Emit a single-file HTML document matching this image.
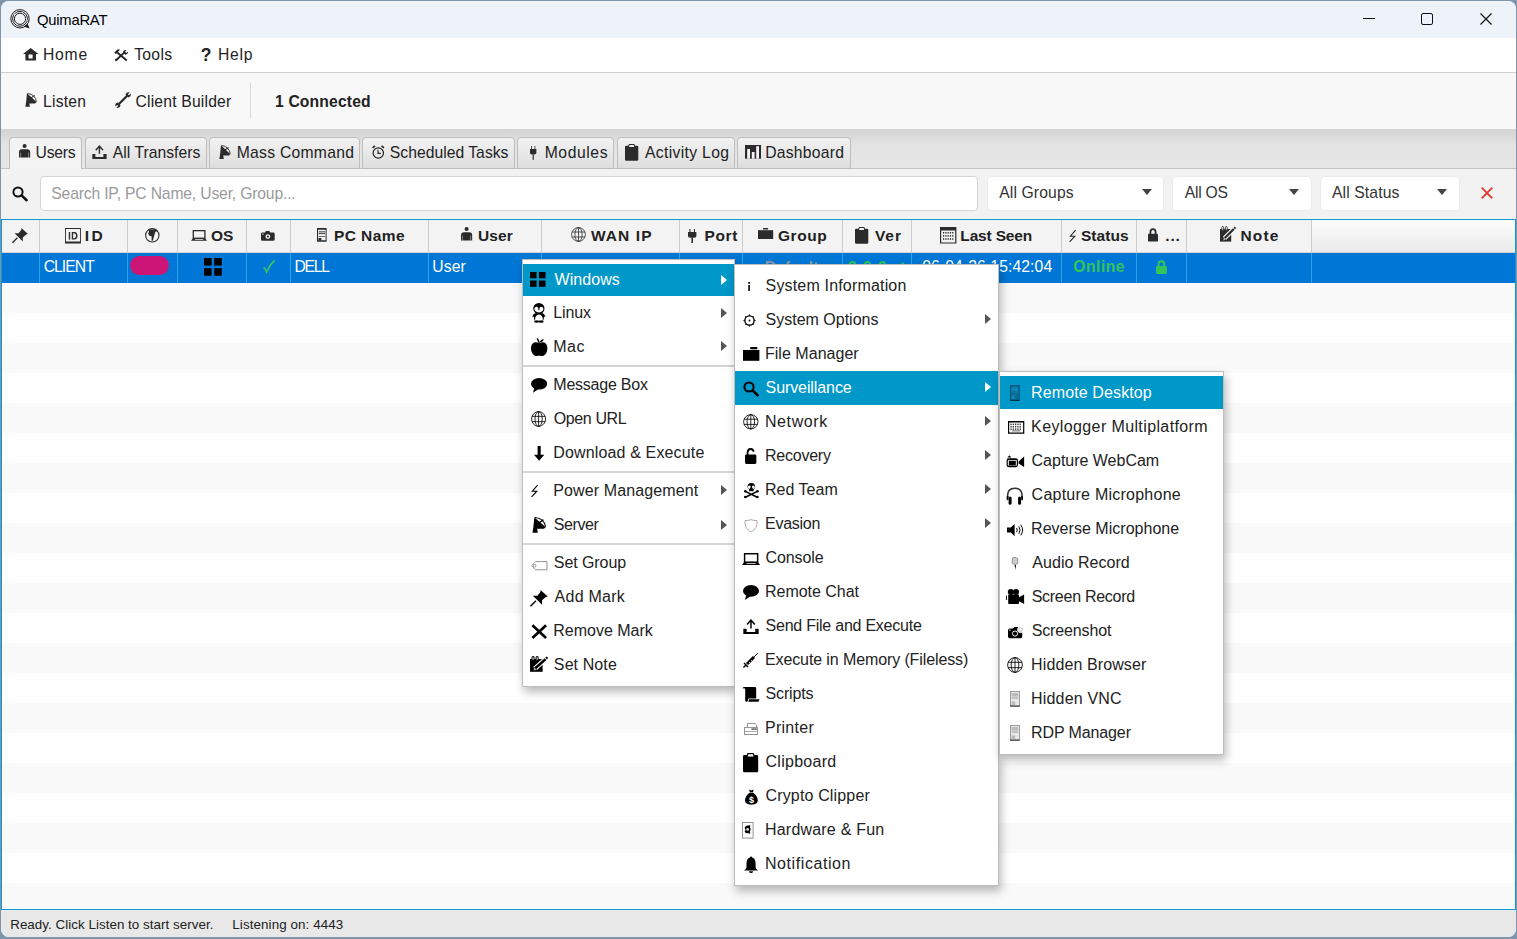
<!DOCTYPE html>
<html><head><meta charset="utf-8"><title>QuimaRAT</title>
<style>
html,body{margin:0;padding:0;}
body{width:1517px;height:939px;overflow:hidden;position:relative;background:#7f95ab;font-family:"Liberation Sans",sans-serif;}
.t{position:absolute;white-space:nowrap;line-height:20px;height:20px;}
svg{overflow:visible;}
</style></head><body>
<div id="win" style="position:absolute;left:1px;top:1px;width:1515px;height:936px;border-radius:8px;overflow:hidden;background:#f2f2f2;">
<div style="position:absolute;left:-1px;top:-1px;width:1517px;height:939px;">
<div style="position:absolute;left:0.00px;top:0.00px;width:1517.00px;height:38.00px;background:#eef3f9;"></div>
<div class="t" style="left:37.00px;top:10.36px;font-size:14.80px;letter-spacing:-0.236px;color:#000;">QuimaRAT</div>
<svg style="position:absolute;left:10.00px;top:9.00px;color:#111;fill:#111;" width="20.00" height="20.00" viewBox="0 0 20 20" preserveAspectRatio="none"><g fill="none" stroke="#111" stroke-width="0.95"><circle cx="10" cy="9.8" r="9.2"/><circle cx="10" cy="9.8" r="7.4"/><circle cx="10" cy="9.8" r="5.6"/></g><path d="M14 17.5L19.6 19.6L17.6 15" fill="#111"/><path d="M4 6L7 4M12 3L14 5M16 9L17 12M5 14L8 16" stroke="#f0f3f9" stroke-width="0.8"/></svg>
<div style="position:absolute;left:1363.00px;top:18.00px;width:12.00px;height:1.20px;background:#111;"></div>
<div style="position:absolute;left:1421.00px;top:13.00px;width:12.00px;height:12.00px;border:1.2px solid #111;border-radius:2px;box-sizing:border-box;"></div>
<svg style="position:absolute;left:1480.00px;top:13.00px;" width="12" height="12" viewBox="0 0 12 12"><path d="M0.5 0.5L11.5 11.5M11.5 0.5L0.5 11.5" stroke="#111" stroke-width="1.2"/></svg>
<div style="position:absolute;left:0.00px;top:38.00px;width:1517.00px;height:34.00px;background:#fff;"></div>
<div style="position:absolute;left:0.00px;top:72.00px;width:1517.00px;height:1.00px;background:#cfcfcf;"></div>
<div class="t" style="left:43.01px;top:45.45px;font-size:15.70px;letter-spacing:0.768px;color:#222;">Home</div>
<div class="t" style="left:134.15px;top:45.45px;font-size:15.70px;letter-spacing:0.317px;color:#222;">Tools</div>
<div class="t" style="left:218.11px;top:45.45px;font-size:15.70px;letter-spacing:0.686px;color:#222;">Help</div>
<svg style="position:absolute;left:23.30px;top:48.20px;color:#2b2b2b;fill:#2b2b2b;" width="15.40" height="12.60" viewBox="0 0 15.4 12.6" preserveAspectRatio="none"><path fill-rule="evenodd" d="M7.7 0L15.4 6.1H13V12.6H2.4V6.1H0Z M5.6 6.6V10.6H9.6V6.6Z"/></svg>
<svg style="position:absolute;left:114.00px;top:48.70px;color:#222;fill:#222;" width="14.00" height="12.20" viewBox="0 0 14 12.2" preserveAspectRatio="none"><g stroke="currentColor" stroke-width="1.9" stroke-linecap="butt"><path d="M3.2 3.6L12.8 11.6"/><path d="M2 11.2L10.6 3.4"/></g><path d="M0.2 3.6L3.8 0.2L6 0.8L2 4.9Z"/><path d="M9 3.2Q9.6 0.6 12.4 1.2L11 2.8L12.2 4L13.8 2.6Q14.2 5.4 11.4 5.8Z"/><path d="M1 9.5L3.6 12L1.4 12.2Z"/></svg>
<div class="t" style="left:200.80px;top:44.53px;font-size:17.50px;font-weight:bold;color:#222;">?</div>
<div style="position:absolute;left:0.00px;top:73.00px;width:1517.00px;height:56.00px;background:#f8f8f8;"></div>
<div class="t" style="left:43.01px;top:91.65px;font-size:15.70px;letter-spacing:0.222px;color:#222;">Listen</div>
<div class="t" style="left:135.50px;top:91.65px;font-size:15.70px;letter-spacing:0.183px;color:#222;">Client Builder</div>
<div style="position:absolute;left:250.00px;top:83.00px;width:1.00px;height:35.00px;background:#d9d9d9;"></div>
<svg style="position:absolute;left:25.10px;top:92.90px;color:#2b2b2b;fill:#2b2b2b;" width="11.80" height="14.00" viewBox="0 0 12 14" preserveAspectRatio="none"><path d="M2 0.2L11.8 9L10.2 10.4H4.4L5 13.8H0.4L1.2 8.6Z"/><path d="M2.6 0.5Q10.2 1.2 11.7 8.6" fill="none" stroke="currentColor" stroke-width="0.9"/><path d="M5.6 5.4L9.8 2.4" stroke="currentColor" stroke-width="1.1"/></svg>
<svg style="position:absolute;left:114.90px;top:91.80px;color:#2b2b2b;fill:#2b2b2b;" width="16.10" height="16.20" viewBox="0 0 16 16.2" preserveAspectRatio="none"><path d="M3.2 12.8L12.6 3.2" stroke="currentColor" stroke-width="2.3"/><path d="M10.4 2.6Q11.4 -0.4 14.6 0.4L12.8 2.2L13.8 3.2L15.6 1.6Q16.4 4.6 13.4 5.6Z"/><path d="M5.6 13.6Q4.6 16.6 1.4 15.8L3.2 14L2.2 13L0.4 14.6Q-0.4 11.6 2.6 10.6Z"/></svg>
<div class="t" style="left:275.01px;top:91.65px;font-size:15.70px;font-weight:bold;letter-spacing:0.151px;color:#222;">1 Connected</div>
<div style="position:absolute;left:0.00px;top:129.00px;width:1517.00px;height:39.00px;background:linear-gradient(#d3d3d3,#e3e3e3 40%,#e6e6e6);"></div>
<div style="position:absolute;left:0.00px;top:168.00px;width:1517.00px;height:1.00px;background:#c4c4c4;"></div>
<div style="position:absolute;left:8.50px;top:137.00px;width:73.70px;height:32.00px;background:#f3f3f3;border:1px solid #bdbdbd;border-bottom:none;border-radius:4px 4px 0 0;box-sizing:border-box;"></div>
<div class="t" style="left:35.59px;top:142.65px;font-size:15.70px;letter-spacing:-0.255px;color:#222;">Users</div>
<div style="position:absolute;left:84.50px;top:137.00px;width:122.50px;height:32.00px;background:linear-gradient(#f2f2f2,#dedede);border:1px solid #bdbdbd;border-radius:4px 4px 0 0;box-sizing:border-box;"></div>
<div class="t" style="left:112.77px;top:142.65px;font-size:15.70px;letter-spacing:0.029px;color:#222;">All Transfers</div>
<div style="position:absolute;left:209.00px;top:137.00px;width:151.00px;height:32.00px;background:linear-gradient(#f2f2f2,#dedede);border:1px solid #bdbdbd;border-radius:4px 4px 0 0;box-sizing:border-box;"></div>
<div class="t" style="left:236.71px;top:142.65px;font-size:15.70px;letter-spacing:0.273px;color:#222;">Mass Command</div>
<div style="position:absolute;left:362.00px;top:137.00px;width:153.00px;height:32.00px;background:linear-gradient(#f2f2f2,#dedede);border:1px solid #bdbdbd;border-radius:4px 4px 0 0;box-sizing:border-box;"></div>
<div class="t" style="left:389.79px;top:142.65px;font-size:15.70px;letter-spacing:0.026px;color:#222;">Scheduled Tasks</div>
<div style="position:absolute;left:517.00px;top:137.00px;width:97.00px;height:32.00px;background:linear-gradient(#f2f2f2,#dedede);border:1px solid #bdbdbd;border-radius:4px 4px 0 0;box-sizing:border-box;"></div>
<div class="t" style="left:544.71px;top:142.65px;font-size:15.70px;letter-spacing:0.585px;color:#222;">Modules</div>
<div style="position:absolute;left:617.00px;top:137.00px;width:118.00px;height:32.00px;background:linear-gradient(#f2f2f2,#dedede);border:1px solid #bdbdbd;border-radius:4px 4px 0 0;box-sizing:border-box;"></div>
<div class="t" style="left:644.97px;top:142.65px;font-size:15.70px;letter-spacing:0.342px;color:#222;">Activity Log</div>
<div style="position:absolute;left:737.00px;top:137.00px;width:114.00px;height:32.00px;background:linear-gradient(#f2f2f2,#dedede);border:1px solid #bdbdbd;border-radius:4px 4px 0 0;box-sizing:border-box;"></div>
<div class="t" style="left:765.21px;top:142.65px;font-size:15.70px;letter-spacing:0.249px;color:#222;">Dashboard</div>
<svg style="position:absolute;left:18.60px;top:143.90px;color:#2b2b2b;fill:#2b2b2b;" width="11.20" height="13.60" viewBox="0 0 11.2 13.6" preserveAspectRatio="none"><circle cx="5.6" cy="2" r="2.05"/><path d="M0 13.6V8.2Q0 5.2 3 5.2H8.2Q11.2 5.2 11.2 8.2V13.6Z"/><path d="M1.6 8.6V13.6M9.6 8.6V13.6" stroke="#fff" stroke-opacity="0.7" stroke-width="0.6"/></svg>
<svg style="position:absolute;left:92.40px;top:145.00px;color:#2b2b2b;fill:#2b2b2b;" width="15.00" height="14.00" viewBox="0 0 15 14" preserveAspectRatio="none"><path d="M3.8 5.2L7.4 1L11 5.2M7.4 1.2V8.8" fill="none" stroke="currentColor" stroke-width="1.4"/><path d="M0.3 9.1H3.4V12.1H11.4V9.1H14.6V13.9H0.3Z"/></svg>
<svg style="position:absolute;left:219.40px;top:144.60px;color:#2b2b2b;fill:#2b2b2b;" width="11.60" height="14.30" viewBox="0 0 12 14" preserveAspectRatio="none"><path d="M2 0.2L11.8 9L10.2 10.4H4.4L5 13.8H0.4L1.2 8.6Z"/><path d="M2.6 0.5Q10.2 1.2 11.7 8.6" fill="none" stroke="currentColor" stroke-width="0.9"/><path d="M5.6 5.4L9.8 2.4" stroke="currentColor" stroke-width="1.1"/></svg>
<svg style="position:absolute;left:372.00px;top:144.80px;color:#222;fill:#222;" width="12.60" height="14.00" viewBox="0 0 12.6 14" preserveAspectRatio="none"><g fill="none" stroke="currentColor"><circle cx="6.3" cy="8" r="5.2" stroke-width="1.2"/><path d="M6 4.8V8.4H8.8" stroke-width="1.1"/><path d="M0.6 2.8L3 0.8M12 2.8L9.6 0.8" stroke-width="1.5"/></g></svg>
<svg style="position:absolute;left:529.90px;top:146.00px;color:#2b2b2b;fill:#2b2b2b;" width="6.40" height="13.80" viewBox="0 0 6.4 13.8" preserveAspectRatio="none"><rect x="1.1" y="0" width="0.8" height="3.4"/><rect x="4.5" y="0" width="0.8" height="3.4"/><path d="M0 3H6.4V6.8Q6.4 8.6 4.6 8.6H1.8Q0 8.6 0 6.8Z"/><rect x="2.6" y="8.4" width="1.2" height="5.4"/></svg>
<svg style="position:absolute;left:625.40px;top:144.10px;color:#2b2b2b;fill:#2b2b2b;" width="13.30" height="16.70" viewBox="0 0 13.3 16.7" preserveAspectRatio="none"><path fill-rule="evenodd" d="M1.2 1.8H3.3L4 0H9.3L10 1.8H12.1Q13.3 1.8 13.3 3V15.5Q13.3 16.7 12.1 16.7H1.2Q0 16.7 0 15.5V3Q0 1.8 1.2 1.8Z M4.6 1.1L4.1 3H9.2L8.7 1.1Z"/></svg>
<svg style="position:absolute;left:744.90px;top:145.00px;color:#2b2b2b;fill:#2b2b2b;" width="16.00" height="13.70" viewBox="0 0 16 13.7" preserveAspectRatio="none"><rect x="0" y="0" width="16" height="13.7"/><rect x="2.2" y="4" width="2.8" height="9.7" fill="#f4f4f4"/><rect x="6.8" y="7" width="2.8" height="6.7" fill="#f4f4f4"/><rect x="11.2" y="1.2" width="2.8" height="12.5" fill="#f4f4f4"/></svg>
<div style="position:absolute;left:0.00px;top:169.00px;width:1517.00px;height:50.00px;background:#f2f2f2;"></div>
<svg style="position:absolute;left:12.00px;top:186.00px;color:#111;fill:#111;" width="16.00" height="15.40" viewBox="0 0 16 15.4" preserveAspectRatio="none"><g fill="none" stroke="currentColor"><circle cx="6" cy="6" r="4.6" stroke-width="2"/><path d="M9.6 9.4L14.6 14.2" stroke-width="2.6" stroke-linecap="round"/></g></svg>
<div style="position:absolute;left:39.50px;top:175.50px;width:938.00px;height:35.00px;background:#fff;border:1px solid #d4d4d4;border-radius:4px;box-sizing:border-box;"></div>
<div class="t" style="left:51.29px;top:184.15px;font-size:15.70px;letter-spacing:-0.167px;color:#9a9a9a;">Search IP, PC Name, User, Group...</div>
<div style="position:absolute;left:988.30px;top:176.70px;width:174.40px;height:33.00px;background:#fff;border-radius:4px;box-shadow:0 0 0 0.5px #e4e4e4;"></div>
<div class="t" style="left:999.27px;top:183.15px;font-size:15.70px;letter-spacing:0.122px;color:#333;">All Groups</div>
<svg style="position:absolute;left:1141.70px;top:189.00px;" width="10" height="6" viewBox="0 0 10 6"><path d="M0 0H10L5 6Z" fill="#444"/></svg>
<div style="position:absolute;left:1173.00px;top:176.70px;width:137.60px;height:33.00px;background:#fff;border-radius:4px;box-shadow:0 0 0 0.5px #e4e4e4;"></div>
<div class="t" style="left:1184.67px;top:183.15px;font-size:15.70px;letter-spacing:-0.229px;color:#333;">All OS</div>
<svg style="position:absolute;left:1289.30px;top:189.00px;" width="10" height="6" viewBox="0 0 10 6"><path d="M0 0H10L5 6Z" fill="#444"/></svg>
<div style="position:absolute;left:1321.00px;top:176.70px;width:137.60px;height:33.00px;background:#fff;border-radius:4px;box-shadow:0 0 0 0.5px #e4e4e4;"></div>
<div class="t" style="left:1331.97px;top:183.15px;font-size:15.70px;letter-spacing:0.120px;color:#333;">All Status</div>
<svg style="position:absolute;left:1437.30px;top:189.00px;" width="10" height="6" viewBox="0 0 10 6"><path d="M0 0H10L5 6Z" fill="#444"/></svg>
<svg style="position:absolute;left:1481.00px;top:186.50px;" width="12" height="12" viewBox="0 0 12 12"><path d="M0.7 0.7L11.3 11.3M11.3 0.7L0.7 11.3" stroke="#e0382c" stroke-width="1.8"/></svg>
<div style="position:absolute;left:1.00px;top:218.50px;width:1515.00px;height:691.00px;border:1px solid #0d9ad4;box-sizing:border-box;background:#fff;"></div>
<div style="position:absolute;left:2.00px;top:283.00px;width:1513.00px;height:30.00px;background:#f9f9f9;"></div>
<div style="position:absolute;left:2.00px;top:343.00px;width:1513.00px;height:30.00px;background:#f9f9f9;"></div>
<div style="position:absolute;left:2.00px;top:403.00px;width:1513.00px;height:30.00px;background:#f9f9f9;"></div>
<div style="position:absolute;left:2.00px;top:463.00px;width:1513.00px;height:30.00px;background:#f9f9f9;"></div>
<div style="position:absolute;left:2.00px;top:523.00px;width:1513.00px;height:30.00px;background:#f9f9f9;"></div>
<div style="position:absolute;left:2.00px;top:583.00px;width:1513.00px;height:30.00px;background:#f9f9f9;"></div>
<div style="position:absolute;left:2.00px;top:643.00px;width:1513.00px;height:30.00px;background:#f9f9f9;"></div>
<div style="position:absolute;left:2.00px;top:703.00px;width:1513.00px;height:30.00px;background:#f9f9f9;"></div>
<div style="position:absolute;left:2.00px;top:763.00px;width:1513.00px;height:30.00px;background:#f9f9f9;"></div>
<div style="position:absolute;left:2.00px;top:823.00px;width:1513.00px;height:30.00px;background:#f9f9f9;"></div>
<div style="position:absolute;left:2.00px;top:883.00px;width:1513.00px;height:25.00px;background:#f9f9f9;"></div>
<div style="position:absolute;left:2.00px;top:219.50px;width:1310.00px;height:33.00px;background:#f3f3f3;"></div>
<div style="position:absolute;left:1312.00px;top:219.50px;width:203.00px;height:33.00px;background:linear-gradient(#fdfdfd,#e9e9e9);"></div>
<div style="position:absolute;left:2.00px;top:252.00px;width:1513.00px;height:1.00px;background:#d0d0d0;"></div>
<div style="position:absolute;left:39.00px;top:219.50px;width:1.00px;height:33.00px;background:#cccccc;"></div>
<div style="position:absolute;left:127.00px;top:219.50px;width:1.00px;height:33.00px;background:#cccccc;"></div>
<div style="position:absolute;left:177.00px;top:219.50px;width:1.00px;height:33.00px;background:#cccccc;"></div>
<div style="position:absolute;left:246.00px;top:219.50px;width:1.00px;height:33.00px;background:#cccccc;"></div>
<div style="position:absolute;left:290.00px;top:219.50px;width:1.00px;height:33.00px;background:#cccccc;"></div>
<div style="position:absolute;left:428.00px;top:219.50px;width:1.00px;height:33.00px;background:#cccccc;"></div>
<div style="position:absolute;left:541.00px;top:219.50px;width:1.00px;height:33.00px;background:#cccccc;"></div>
<div style="position:absolute;left:679.00px;top:219.50px;width:1.00px;height:33.00px;background:#cccccc;"></div>
<div style="position:absolute;left:742.00px;top:219.50px;width:1.00px;height:33.00px;background:#cccccc;"></div>
<div style="position:absolute;left:842.00px;top:219.50px;width:1.00px;height:33.00px;background:#cccccc;"></div>
<div style="position:absolute;left:911.00px;top:219.50px;width:1.00px;height:33.00px;background:#cccccc;"></div>
<div style="position:absolute;left:1061.00px;top:219.50px;width:1.00px;height:33.00px;background:#cccccc;"></div>
<div style="position:absolute;left:1136.00px;top:219.50px;width:1.00px;height:33.00px;background:#cccccc;"></div>
<div style="position:absolute;left:1186.00px;top:219.50px;width:1.00px;height:33.00px;background:#cccccc;"></div>
<div style="position:absolute;left:1311.00px;top:219.50px;width:1.00px;height:33.00px;background:#cccccc;"></div>
<div class="t" style="left:84.66px;top:225.92px;font-size:15.50px;font-weight:bold;letter-spacing:2.488px;color:#222;">ID</div>
<div class="t" style="left:211.06px;top:225.92px;font-size:15.50px;font-weight:bold;letter-spacing:-0.154px;color:#222;">OS</div>
<div class="t" style="left:333.96px;top:225.92px;font-size:15.50px;font-weight:bold;letter-spacing:0.418px;color:#222;">PC Name</div>
<div class="t" style="left:478.07px;top:225.92px;font-size:15.50px;font-weight:bold;letter-spacing:0.066px;color:#222;">User</div>
<div class="t" style="left:590.98px;top:225.92px;font-size:15.50px;font-weight:bold;letter-spacing:1.086px;color:#222;">WAN IP</div>
<div class="t" style="left:704.56px;top:225.92px;font-size:15.50px;font-weight:bold;letter-spacing:0.608px;color:#222;">Port</div>
<div class="t" style="left:777.96px;top:225.92px;font-size:15.50px;font-weight:bold;letter-spacing:0.545px;color:#222;">Group</div>
<div class="t" style="left:874.89px;top:225.92px;font-size:15.50px;font-weight:bold;letter-spacing:0.952px;color:#222;">Ver</div>
<div class="t" style="left:960.36px;top:225.92px;font-size:15.50px;font-weight:bold;letter-spacing:-0.179px;color:#222;">Last Seen</div>
<div class="t" style="left:1080.95px;top:225.92px;font-size:15.50px;font-weight:bold;letter-spacing:0.042px;color:#222;">Status</div>
<div class="t" style="left:1165.35px;top:225.92px;font-size:15.50px;font-weight:bold;letter-spacing:0.750px;color:#222;">...</div>
<div class="t" style="left:1240.46px;top:225.92px;font-size:15.50px;font-weight:bold;letter-spacing:1.141px;color:#222;">Note</div>
<svg style="position:absolute;left:11.90px;top:227.80px;color:#2b2b2b;fill:#2b2b2b;" width="16.00" height="15.00" viewBox="0 0 16 15" preserveAspectRatio="none"><path d="M9.4 0L16 6L14.2 6.4L10.8 9.4L10.8 13.4L2.6 5.2L6.6 5.2L9.4 1.8Z"/><path d="M5.4 9.8L0.4 14.8" stroke="currentColor" stroke-width="1.3"/></svg>
<svg style="position:absolute;left:65.10px;top:228.00px;color:#2b2b2b;fill:#2b2b2b;" width="15.90" height="15.60" viewBox="0 0 16 15.6" preserveAspectRatio="none"><path fill-rule="evenodd" d="M0 0H16V15.6H0Z M0.9 0.9V13.6H15.1V0.9Z"/><rect x="3.8" y="4" width="1.4" height="7.6"/><path fill-rule="evenodd" d="M6.8 4H9.4Q12.6 4 12.6 7.8Q12.6 11.6 9.4 11.6H6.8Z M8.2 5.3V10.3H9.3Q11.1 10.3 11.1 7.8Q11.1 5.3 9.3 5.3Z"/></svg>
<svg style="position:absolute;left:144.80px;top:227.60px;color:#2b2b2b;fill:#2b2b2b;" width="14.60" height="14.60" viewBox="0 0 14.6 14.6" preserveAspectRatio="none"><circle cx="7.3" cy="7.3" r="6.7" fill="none" stroke="currentColor" stroke-width="1.1"/><path d="M3.6 1.4H11.6L12.8 3.4L10.6 3.6L9.8 5.6L9 8.6L7.8 12.8H6.6L6.6 8.2L4.2 7.8L3.2 5.4L4 3.4Z"/></svg>
<svg style="position:absolute;left:191.00px;top:230.00px;color:#2b2b2b;fill:#2b2b2b;" width="16.00" height="10.80" viewBox="0 0 16 10.8" preserveAspectRatio="none"><rect x="2.3" y="0.65" width="11.6" height="7.6" fill="none" stroke="currentColor" stroke-width="1.3"/><path fill-rule="evenodd" d="M2 8.2H14.2L16 10.8H0Z M4 9.2V10H12.2V9.2Z"/></svg>
<svg style="position:absolute;left:261.00px;top:231.00px;color:#2b2b2b;fill:#2b2b2b;" width="13.70" height="9.80" viewBox="0 0 13.7 9.8" preserveAspectRatio="none"><path fill-rule="evenodd" d="M0 3Q0 1.6 1.4 1.6H4L4.8 0H8.4L9.2 1.6H12.3Q13.7 1.6 13.7 3V8.4Q13.7 9.8 12.3 9.8H1.4Q0 9.8 0 8.4Z M6.9 3.2A2.4 2.4 0 1 0 6.9 8A2.4 2.4 0 1 0 6.9 3.2Z"/><circle cx="6.9" cy="5.6" r="1.1"/><rect x="1.2" y="2.6" width="1.4" height="0.9" fill="#fff"/></svg>
<svg style="position:absolute;left:317.20px;top:228.00px;color:#2b2b2b;fill:#2b2b2b;" width="9.60" height="13.80" viewBox="0 0 9.6 13.8" preserveAspectRatio="none"><path fill-rule="evenodd" d="M0 0H9.6V13.8H0Z M1 1.8V12.2H8.6V1.8Z"/><rect x="1.6" y="3.4" width="6.4" height="0.9"/><rect x="1.6" y="5.2" width="6.4" height="0.9"/><rect x="1.6" y="8.2" width="6.4" height="0.7"/><rect x="1.4" y="10" width="3" height="2.6"/></svg>
<svg style="position:absolute;left:460.60px;top:227.20px;color:#2b2b2b;fill:#2b2b2b;" width="11.20" height="13.60" viewBox="0 0 11.2 13.6" preserveAspectRatio="none"><circle cx="5.6" cy="2" r="2.05"/><path d="M0 13.6V8.2Q0 5.2 3 5.2H8.2Q11.2 5.2 11.2 8.2V13.6Z"/><path d="M1.6 8.6V13.6M9.6 8.6V13.6" stroke="#fff" stroke-opacity="0.7" stroke-width="0.6"/></svg>
<svg style="position:absolute;left:570.80px;top:227.20px;color:#2b2b2b;fill:#2b2b2b;" width="15.00" height="15.00" viewBox="0 0 15 15" preserveAspectRatio="none"><g fill="none" stroke="currentColor" stroke-width="0.8"><circle cx="7.5" cy="7.5" r="6.9"/><ellipse cx="7.5" cy="7.5" rx="3.6" ry="6.9"/><path d="M7.5 0.6V14.4M1 5H14M1 10H14"/></g></svg>
<svg style="position:absolute;left:688.00px;top:228.50px;color:#2b2b2b;fill:#2b2b2b;" width="8.40" height="14.00" viewBox="0 0 6.4 13.8" preserveAspectRatio="none"><rect x="1.1" y="0" width="0.8" height="3.4"/><rect x="4.5" y="0" width="0.8" height="3.4"/><path d="M0 3H6.4V6.8Q6.4 8.6 4.6 8.6H1.8Q0 8.6 0 6.8Z"/><rect x="2.6" y="8.4" width="1.2" height="5.4"/></svg>
<svg style="position:absolute;left:758.30px;top:228.00px;color:#2b2b2b;fill:#2b2b2b;" width="15.20" height="11.00" viewBox="0 0 15.2 11" preserveAspectRatio="none"><rect x="0" y="2.2" width="15.2" height="8.8"/><rect x="5" y="0" width="5.2" height="1.5" rx="0.6"/></svg>
<svg style="position:absolute;left:855.00px;top:226.80px;color:#2b2b2b;fill:#2b2b2b;" width="13.30" height="16.70" viewBox="0 0 13.3 16.7" preserveAspectRatio="none"><path fill-rule="evenodd" d="M1.2 1.8H3.3L4 0H9.3L10 1.8H12.1Q13.3 1.8 13.3 3V15.5Q13.3 16.7 12.1 16.7H1.2Q0 16.7 0 15.5V3Q0 1.8 1.2 1.8Z M4.6 1.1L4.1 3H9.2L8.7 1.1Z"/></svg>
<svg style="position:absolute;left:939.50px;top:227.00px;color:#2b2b2b;fill:#2b2b2b;" width="16.40" height="16.60" viewBox="0 0 16.4 16.6" preserveAspectRatio="none"><path fill-rule="evenodd" d="M0 0H16.4V16.6H0Z M1.2 3.6V15.4H15.2V3.6Z"/><g><rect x="3" y="5" width="1.2" height="1.6"/><rect x="3" y="8.1" width="1.2" height="1.6"/><rect x="3" y="11.2" width="1.2" height="1.6"/><rect x="5.3" y="5" width="1.2" height="1.6"/><rect x="5.3" y="8.1" width="1.2" height="1.6"/><rect x="5.3" y="11.2" width="1.2" height="1.6"/><rect x="7.6" y="5" width="1.2" height="1.6"/><rect x="7.6" y="8.1" width="1.2" height="1.6"/><rect x="7.6" y="11.2" width="1.2" height="1.6"/><rect x="9.9" y="5" width="1.2" height="1.6"/><rect x="9.9" y="8.1" width="1.2" height="1.6"/><rect x="9.9" y="11.2" width="1.2" height="1.6"/><rect x="12.2" y="5" width="1.2" height="1.6"/><rect x="12.2" y="8.1" width="1.2" height="1.6"/><rect x="12.2" y="11.2" width="1.2" height="1.6"/></g></svg>
<svg style="position:absolute;left:1069.00px;top:229.80px;color:#2b2b2b;fill:#2b2b2b;" width="7.20" height="12.00" viewBox="0 0 7.2 12" preserveAspectRatio="none"><path d="M6.6 0.2L1.4 6.2H5.8L0.6 11.8" fill="none" stroke="currentColor" stroke-width="1.1"/></svg>
<svg style="position:absolute;left:1148.00px;top:228.20px;color:#2b2b2b;fill:#2b2b2b;" width="10.00" height="13.60" viewBox="0 0 10 13.6" preserveAspectRatio="none"><path d="M2.4 6V4.2Q2.4 1.2 5 1.2Q7.6 1.2 7.6 4.2V6" fill="none" stroke="currentColor" stroke-width="1.8"/><rect x="0" y="5.8" width="10" height="7.8" rx="1.2"/></svg>
<svg style="position:absolute;left:1220.00px;top:226.40px;color:#2b2b2b;fill:#2b2b2b;" width="16.00" height="15.60" viewBox="0 0 16 15.6" preserveAspectRatio="none"><rect x="0" y="3" width="11.2" height="12.6"/><g fill="#fff" stroke="currentColor" stroke-width="0.9"><rect x="1.8" y="0.5" width="1.8" height="3.8" rx="0.9"/><rect x="5.4" y="0.5" width="1.8" height="3.8" rx="0.9"/></g><path d="M4.4 12.4L13.8 3" stroke="#fff" stroke-width="4.4"/><path d="M4.8 12L13.8 3" stroke="currentColor" stroke-width="2.4"/><path d="M3 14.4L3.9 11.4L6 13.5Z" fill="#fff" stroke="currentColor" stroke-width="0.6"/><path d="M13.6 1.8L14.8 0.6L16.2 2L15 3.2Z"/></svg>
<div style="position:absolute;left:2.00px;top:253.00px;width:1513.00px;height:30.00px;background:#0077d6;"></div>
<div style="position:absolute;left:39.00px;top:253.00px;width:1.00px;height:30.00px;background:#2aa6e2;"></div>
<div style="position:absolute;left:127.00px;top:253.00px;width:1.00px;height:30.00px;background:#2aa6e2;"></div>
<div style="position:absolute;left:177.00px;top:253.00px;width:1.00px;height:30.00px;background:#2aa6e2;"></div>
<div style="position:absolute;left:246.00px;top:253.00px;width:1.00px;height:30.00px;background:#2aa6e2;"></div>
<div style="position:absolute;left:290.00px;top:253.00px;width:1.00px;height:30.00px;background:#2aa6e2;"></div>
<div style="position:absolute;left:428.00px;top:253.00px;width:1.00px;height:30.00px;background:#2aa6e2;"></div>
<div style="position:absolute;left:541.00px;top:253.00px;width:1.00px;height:30.00px;background:#2aa6e2;"></div>
<div style="position:absolute;left:679.00px;top:253.00px;width:1.00px;height:30.00px;background:#2aa6e2;"></div>
<div style="position:absolute;left:742.00px;top:253.00px;width:1.00px;height:30.00px;background:#2aa6e2;"></div>
<div style="position:absolute;left:842.00px;top:253.00px;width:1.00px;height:30.00px;background:#2aa6e2;"></div>
<div style="position:absolute;left:911.00px;top:253.00px;width:1.00px;height:30.00px;background:#2aa6e2;"></div>
<div style="position:absolute;left:1061.00px;top:253.00px;width:1.00px;height:30.00px;background:#2aa6e2;"></div>
<div style="position:absolute;left:1136.00px;top:253.00px;width:1.00px;height:30.00px;background:#2aa6e2;"></div>
<div style="position:absolute;left:1186.00px;top:253.00px;width:1.00px;height:30.00px;background:#2aa6e2;"></div>
<div style="position:absolute;left:1311.00px;top:253.00px;width:1.00px;height:30.00px;background:#2aa6e2;"></div>
<div class="t" style="left:43.70px;top:257.25px;font-size:15.70px;letter-spacing:-0.935px;color:#fff;">CLIENT</div>
<div style="position:absolute;left:130.00px;top:256.30px;width:38.50px;height:18.40px;background:#cc1577;border-radius:9.2px;"></div>
<div class="t" style="left:294.51px;top:257.25px;font-size:15.70px;letter-spacing:-1.222px;color:#fff;">DELL</div>
<svg style="position:absolute;left:203.70px;top:257.90px;color:#000;fill:#000;" width="17.80" height="17.70" viewBox="0 0 15.5 14.8" preserveAspectRatio="none"><rect x="0" y="0" width="6.6" height="6.3"/><rect x="8.9" y="0" width="6.6" height="6.3"/><rect x="0" y="8.5" width="6.6" height="6.3"/><rect x="8.9" y="8.5" width="6.6" height="6.3"/></svg>
<svg style="position:absolute;left:263.00px;top:259.80px;" width="12" height="12.5" viewBox="0 0 12 12.5"><path d="M0.6 7.2Q2.6 9.2 3.6 12Q6.6 5 11.6 0.4" fill="none" stroke="#3cc95a" stroke-width="1.6"/></svg>
<svg style="position:absolute;left:1155.60px;top:259.50px;color:#35c45a;fill:#35c45a;" width="10.80" height="14.10" viewBox="0 0 10 13.6" preserveAspectRatio="none"><path d="M2.4 6V4.2Q2.4 1.2 5 1.2Q7.6 1.2 7.6 4.2V6" fill="none" stroke="currentColor" stroke-width="1.8"/><rect x="0" y="5.8" width="10" height="7.8" rx="1.2"/></svg>
<div class="t" style="left:432.29px;top:257.25px;font-size:15.70px;letter-spacing:0.108px;color:#fff;">User</div>
<div class="t" style="left:764.85px;top:258.15px;font-size:15.70px;font-weight:bold;letter-spacing:0.072px;color:#8c9aa6;">Default</div>
<div class="t" style="left:848.04px;top:258.05px;font-size:15.70px;font-weight:bold;letter-spacing:0.981px;color:#35c45a;">3.0.0 ✓</div>
<div class="t" style="left:922.19px;top:257.25px;font-size:15.70px;letter-spacing:0.109px;color:#fff;">06-04-26 15:42:04</div>
<div class="t" style="left:1073.36px;top:257.25px;font-size:15.70px;font-weight:bold;letter-spacing:0.467px;color:#35c45a;">Online</div>
<div style="position:absolute;left:0.00px;top:909.50px;width:1517.00px;height:30.00px;background:#e8e8e8;"></div>
<div class="t" style="left:10.20px;top:914.95px;font-size:13.40px;letter-spacing:0.029px;color:#222;">Ready. Click Listen to start server.</div>
<div class="t" style="left:232.30px;top:914.95px;font-size:13.40px;letter-spacing:0.092px;color:#222;">Listening on: 4443</div>
<div style="position:absolute;left:522.00px;top:259.00px;width:213.00px;height:427.50px;background:#fff;border:1px solid #bdbdbd;box-sizing:border-box;box-shadow:2px 5px 9px rgba(0,0,0,0.28);"></div>
<div style="position:absolute;left:523.00px;top:264.00px;width:211.50px;height:32.00px;background:#0097c9;"></div>
<div style="position:absolute;left:523.00px;top:365.00px;width:211.00px;height:1.50px;background:#d4d4d4;"></div>
<div style="position:absolute;left:523.00px;top:471.10px;width:211.00px;height:1.50px;background:#d4d4d4;"></div>
<div style="position:absolute;left:523.00px;top:543.10px;width:211.00px;height:1.50px;background:#d4d4d4;"></div>
<div class="t" style="left:554.53px;top:270.05px;font-size:16.00px;letter-spacing:0.057px;color:#fff;">Windows</div>
<svg style="position:absolute;left:721.00px;top:274.50px;" width="6" height="10" viewBox="0 0 6 10"><path d="M0 0L6 5L0 10Z" fill="#fff"/></svg>
<div class="t" style="left:553.29px;top:303.05px;font-size:16.00px;letter-spacing:-0.142px;color:#222;">Linux</div>
<svg style="position:absolute;left:721.00px;top:307.50px;" width="6" height="10" viewBox="0 0 6 10"><path d="M0 0L6 5L0 10Z" fill="#555"/></svg>
<div class="t" style="left:553.29px;top:336.75px;font-size:16.00px;letter-spacing:0.503px;color:#222;">Mac</div>
<svg style="position:absolute;left:721.00px;top:341.20px;" width="6" height="10" viewBox="0 0 6 10"><path d="M0 0L6 5L0 10Z" fill="#555"/></svg>
<div class="t" style="left:553.29px;top:375.05px;font-size:16.00px;letter-spacing:-0.226px;color:#222;">Message Box</div>
<div class="t" style="left:553.84px;top:409.05px;font-size:16.00px;letter-spacing:-0.401px;color:#222;">Open URL</div>
<div class="t" style="left:553.29px;top:443.25px;font-size:16.00px;letter-spacing:0.146px;color:#222;">Download &amp; Execute</div>
<div class="t" style="left:553.29px;top:480.85px;font-size:16.00px;letter-spacing:0.116px;color:#222;">Power Management</div>
<svg style="position:absolute;left:721.00px;top:485.30px;" width="6" height="10" viewBox="0 0 6 10"><path d="M0 0L6 5L0 10Z" fill="#555"/></svg>
<div class="t" style="left:553.87px;top:515.25px;font-size:16.00px;letter-spacing:-0.427px;color:#222;">Server</div>
<svg style="position:absolute;left:721.00px;top:519.70px;" width="6" height="10" viewBox="0 0 6 10"><path d="M0 0L6 5L0 10Z" fill="#555"/></svg>
<div class="t" style="left:553.87px;top:553.05px;font-size:16.00px;letter-spacing:-0.079px;color:#222;">Set Group</div>
<div class="t" style="left:554.57px;top:586.95px;font-size:16.00px;letter-spacing:0.248px;color:#222;">Add Mark</div>
<div class="t" style="left:553.29px;top:620.95px;font-size:16.00px;letter-spacing:-0.009px;color:#222;">Remove Mark</div>
<div class="t" style="left:553.87px;top:654.75px;font-size:16.00px;letter-spacing:0.097px;color:#222;">Set Note</div>
<svg style="position:absolute;left:529.80px;top:272.00px;color:#000;fill:#000;" width="15.50" height="14.80" viewBox="0 0 15.5 14.8" preserveAspectRatio="none"><rect x="0" y="0" width="6.6" height="6.3"/><rect x="8.9" y="0" width="6.6" height="6.3"/><rect x="0" y="8.5" width="6.6" height="6.3"/><rect x="8.9" y="8.5" width="6.6" height="6.3"/></svg>
<svg style="position:absolute;left:532.00px;top:303.00px;color:#000;fill:#000;" width="13.60" height="19.80" viewBox="0 0 13.6 19.8" preserveAspectRatio="none"><circle cx="6.9" cy="5.5" r="5.6"/><path d="M2.4 5.8Q2.8 3.4 4.8 3.8Q6.2 4.2 6.9 6Q7.6 4.2 9 3.8Q11 3.4 11.4 5.8Q11.4 9 6.9 9.4Q2.4 9 2.4 5.8Z" fill="#fff"/><path d="M5.9 5.6H7.9L6.9 7.8Z"/><path d="M3 10.2Q0.8 11.4 0 14L1.8 13.6Q2 16.4 2.6 17.4H11.2Q11.8 16.4 12 13.6L13.6 14Q12.8 11.4 10.8 10.2Z"/><path d="M3 17.4Q2.8 12.2 6.9 11.6Q11 12.2 10.8 17.4Z" fill="#fff"/><ellipse cx="4.6" cy="18.6" rx="2.5" ry="1.2"/><ellipse cx="9.2" cy="18.6" rx="2.5" ry="1.2"/></svg>
<svg style="position:absolute;left:530.60px;top:337.70px;color:#000;fill:#000;" width="16.40" height="18.10" viewBox="0 0 16.4 18.1" preserveAspectRatio="none"><path d="M8.2 5.2Q10.8 3.6 13.4 4.6Q16.4 6.2 16.4 10.4Q16.2 15.6 12.6 17.8Q10.6 18.4 8.2 17.4Q5.8 18.4 3.8 17.8Q0.2 15.6 0 10.4Q0 6.2 3 4.6Q5.6 3.6 8.2 5.2Z"/><path d="M8.4 5L6.2 0.4" stroke="currentColor" stroke-width="1.4"/><path d="M8.8 4.2Q9.6 1 12.8 1.2Q12 4 8.8 4.2Z"/></svg>
<svg style="position:absolute;left:530.90px;top:377.90px;color:#000;fill:#000;" width="16.20" height="14.70" viewBox="0 0 16.2 14.7" preserveAspectRatio="none"><ellipse cx="8.1" cy="5.8" rx="8.1" ry="5.8"/><path d="M3.4 9.4L2 14.7L8 10.8Z"/></svg>
<svg style="position:absolute;left:531.40px;top:411.00px;color:#000;fill:#000;" width="15.20" height="16.00" viewBox="0 0 15 15" preserveAspectRatio="none"><g fill="none" stroke="currentColor" stroke-width="0.8"><circle cx="7.5" cy="7.5" r="6.9"/><ellipse cx="7.5" cy="7.5" rx="3.6" ry="6.9"/><path d="M7.5 0.6V14.4M1 5H14M1 10H14"/></g></svg>
<svg style="position:absolute;left:534.00px;top:446.30px;color:#000;fill:#000;" width="10.30" height="14.70" viewBox="0 0 10.3 14.7" preserveAspectRatio="none"><path d="M3.6 0H6.7V8.8H10.3L5.15 14.7L0 8.8H3.6Z"/></svg>
<svg style="position:absolute;left:530.50px;top:485.40px;color:#000;fill:#000;" width="7.20" height="12.00" viewBox="0 0 7.2 12" preserveAspectRatio="none"><path d="M6.6 0.2L1.4 6.2H5.8L0.6 11.8" fill="none" stroke="currentColor" stroke-width="1.1"/></svg>
<svg style="position:absolute;left:532.20px;top:516.90px;color:#000;fill:#000;" width="14.00" height="15.90" viewBox="0 0 12 14" preserveAspectRatio="none"><path d="M2 0.2L11.8 9L10.2 10.4H4.4L5 13.8H0.4L1.2 8.6Z"/><path d="M2.6 0.5Q10.2 1.2 11.7 8.6" fill="none" stroke="currentColor" stroke-width="0.9"/><path d="M5.6 5.4L9.8 2.4" stroke="currentColor" stroke-width="1.1"/></svg>
<svg style="position:absolute;left:530.50px;top:561.40px;color:#000;fill:#000;" width="16.50" height="9.30" viewBox="0 0 16.5 9.3" preserveAspectRatio="none"><path d="M4.6 0.6H16V8.8H4.6L0.6 4.7Z" fill="none" stroke="#888" stroke-width="0.9"/><circle cx="3.6" cy="4.7" r="1.4" fill="none" stroke="#888" stroke-width="0.8"/></svg>
<svg style="position:absolute;left:529.80px;top:589.50px;color:#000;fill:#000;" width="17.80" height="16.40" viewBox="0 0 16 15" preserveAspectRatio="none"><path d="M9.4 0L16 6L14.2 6.4L10.8 9.4L10.8 13.4L2.6 5.2L6.6 5.2L9.4 1.8Z"/><path d="M5.4 9.8L0.4 14.8" stroke="currentColor" stroke-width="1.3"/></svg>
<svg style="position:absolute;left:530.50px;top:623.50px;color:#000;fill:#000;" width="16.50" height="15.20" viewBox="0 0 16.5 15.2" preserveAspectRatio="none"><path d="M1.4 1.2L15.1 14M15.1 1.2L1.4 14" stroke="currentColor" stroke-width="2.6"/></svg>
<svg style="position:absolute;left:530.00px;top:656.00px;color:#000;fill:#000;" width="18.00" height="15.80" viewBox="0 0 16 15.6" preserveAspectRatio="none"><rect x="0" y="3" width="11.2" height="12.6"/><g fill="#fff" stroke="currentColor" stroke-width="0.9"><rect x="1.8" y="0.5" width="1.8" height="3.8" rx="0.9"/><rect x="5.4" y="0.5" width="1.8" height="3.8" rx="0.9"/></g><path d="M4.4 12.4L13.8 3" stroke="#fff" stroke-width="4.4"/><path d="M4.8 12L13.8 3" stroke="currentColor" stroke-width="2.4"/><path d="M3 14.4L3.9 11.4L6 13.5Z" fill="#fff" stroke="currentColor" stroke-width="0.6"/><path d="M13.6 1.8L14.8 0.6L16.2 2L15 3.2Z"/></svg>
<div style="position:absolute;left:734.30px;top:264.40px;width:264.50px;height:621.50px;background:#fff;border:1px solid #bdbdbd;box-sizing:border-box;box-shadow:2px 5px 9px rgba(0,0,0,0.28);"></div>
<div style="position:absolute;left:735.30px;top:371.00px;width:262.50px;height:34.00px;background:#0097c9;"></div>
<div class="t" style="left:765.57px;top:275.65px;font-size:16.00px;letter-spacing:0.173px;color:#222;">System Information</div>
<div class="t" style="left:765.57px;top:309.65px;font-size:16.00px;letter-spacing:-0.002px;color:#222;">System Options</div>
<svg style="position:absolute;left:985.00px;top:314.10px;" width="6" height="10" viewBox="0 0 6 10"><path d="M0 0L6 5L0 10Z" fill="#555"/></svg>
<div class="t" style="left:764.99px;top:343.65px;font-size:16.00px;letter-spacing:0.027px;color:#222;">File Manager</div>
<div class="t" style="left:765.57px;top:377.65px;font-size:16.00px;letter-spacing:-0.093px;color:#fff;">Surveillance</div>
<svg style="position:absolute;left:985.00px;top:382.10px;" width="6" height="10" viewBox="0 0 6 10"><path d="M0 0L6 5L0 10Z" fill="#fff"/></svg>
<div class="t" style="left:764.99px;top:411.65px;font-size:16.00px;letter-spacing:0.585px;color:#222;">Network</div>
<svg style="position:absolute;left:985.00px;top:416.10px;" width="6" height="10" viewBox="0 0 6 10"><path d="M0 0L6 5L0 10Z" fill="#555"/></svg>
<div class="t" style="left:764.99px;top:445.65px;font-size:16.00px;letter-spacing:-0.234px;color:#222;">Recovery</div>
<svg style="position:absolute;left:985.00px;top:450.10px;" width="6" height="10" viewBox="0 0 6 10"><path d="M0 0L6 5L0 10Z" fill="#555"/></svg>
<div class="t" style="left:764.99px;top:479.65px;font-size:16.00px;letter-spacing:0.019px;color:#222;">Red Team</div>
<svg style="position:absolute;left:985.00px;top:484.10px;" width="6" height="10" viewBox="0 0 6 10"><path d="M0 0L6 5L0 10Z" fill="#555"/></svg>
<div class="t" style="left:764.99px;top:513.65px;font-size:16.00px;letter-spacing:-0.262px;color:#222;">Evasion</div>
<svg style="position:absolute;left:985.00px;top:518.10px;" width="6" height="10" viewBox="0 0 6 10"><path d="M0 0L6 5L0 10Z" fill="#555"/></svg>
<div class="t" style="left:765.49px;top:547.65px;font-size:16.00px;letter-spacing:-0.080px;color:#222;">Console</div>
<div class="t" style="left:764.99px;top:581.65px;font-size:16.00px;letter-spacing:-0.024px;color:#222;">Remote Chat</div>
<div class="t" style="left:765.57px;top:615.65px;font-size:16.00px;letter-spacing:-0.238px;color:#222;">Send File and Execute</div>
<div class="t" style="left:764.99px;top:649.65px;font-size:16.00px;letter-spacing:-0.110px;color:#222;">Execute in Memory (Fileless)</div>
<div class="t" style="left:765.57px;top:683.65px;font-size:16.00px;letter-spacing:-0.149px;color:#222;">Scripts</div>
<div class="t" style="left:764.99px;top:717.65px;font-size:16.00px;letter-spacing:0.275px;color:#222;">Printer</div>
<div class="t" style="left:765.49px;top:751.65px;font-size:16.00px;letter-spacing:0.282px;color:#222;">Clipboard</div>
<div class="t" style="left:765.49px;top:785.65px;font-size:16.00px;letter-spacing:0.155px;color:#222;">Crypto Clipper</div>
<div class="t" style="left:764.99px;top:819.65px;font-size:16.00px;letter-spacing:0.204px;color:#222;">Hardware &amp; Fun</div>
<div class="t" style="left:764.99px;top:853.65px;font-size:16.00px;letter-spacing:0.573px;color:#222;">Notification</div>
<svg style="position:absolute;left:748.20px;top:282.00px;color:#000;fill:#000;" width="2.00" height="9.00" viewBox="0 0 2 9" preserveAspectRatio="none"><rect x="0.2" y="0" width="1.8" height="1.8" rx="0.5"/><rect x="0.3" y="3" width="1.6" height="6"/></svg>
<svg style="position:absolute;left:743.00px;top:314.00px;color:#000;fill:#000;" width="13.00" height="13.00" viewBox="0 0 13 13" preserveAspectRatio="none"><circle cx="6.5" cy="6.5" r="4.6" fill="none" stroke="currentColor" stroke-width="1.3"/><circle cx="6.5" cy="6.5" r="0.9"/><path d="M6.5 0L7.6 1.8H5.4Z M6.5 13L7.6 11.2H5.4Z M0 6.5L1.8 5.4V7.6Z M13 6.5L11.2 5.4V7.6Z M1.9 1.9L3.8 2.5L2.5 3.8Z M11.1 1.9L10.5 3.8L9.2 2.5Z M1.9 11.1L2.5 9.2L3.8 10.5Z M11.1 11.1L9.2 10.5L10.5 9.2Z"/></svg>
<svg style="position:absolute;left:742.80px;top:347.00px;color:#000;fill:#000;" width="16.40" height="13.80" viewBox="0 0 16.4 14" preserveAspectRatio="none"><rect x="0" y="3" width="16.4" height="11"/><rect x="7.2" y="0" width="7.2" height="2.2" rx="0.8"/></svg>
<svg style="position:absolute;left:742.90px;top:381.00px;color:#000;fill:#000;" width="16.00" height="15.40" viewBox="0 0 16 15.4" preserveAspectRatio="none"><g fill="none" stroke="currentColor"><circle cx="6" cy="6" r="4.6" stroke-width="2"/><path d="M9.6 9.4L14.6 14.2" stroke-width="2.6" stroke-linecap="round"/></g></svg>
<svg style="position:absolute;left:743.20px;top:414.00px;color:#000;fill:#000;" width="15.60" height="15.60" viewBox="0 0 15 15" preserveAspectRatio="none"><g fill="none" stroke="currentColor" stroke-width="0.8"><circle cx="7.5" cy="7.5" r="6.9"/><ellipse cx="7.5" cy="7.5" rx="3.6" ry="6.9"/><path d="M7.5 0.6V14.4M1 5H14M1 10H14"/></g></svg>
<svg style="position:absolute;left:745.30px;top:448.00px;color:#000;fill:#000;" width="11.40" height="16.00" viewBox="0 0 11.4 16" preserveAspectRatio="none"><path d="M2.6 8V4.4Q2.6 1 5.6 1Q8.4 1 8.6 3.8" fill="none" stroke="currentColor" stroke-width="1.8"/><rect x="0" y="6.6" width="11.4" height="9.4" rx="1.4"/></svg>
<svg style="position:absolute;left:743.90px;top:483.00px;color:#000;fill:#000;" width="14.70" height="15.00" viewBox="0 0 14.7 15" preserveAspectRatio="none"><path fill-rule="evenodd" d="M7.35 0Q11.2 0 11.2 3.8Q11.2 5.8 9.6 6.6V8.2H5.1V6.6Q3.5 5.8 3.5 3.8Q3.5 0 7.35 0Z M5.2 3.2A1.2 1.3 0 1 0 5.21 3.2Z M9.5 3.2A1.2 1.3 0 1 0 9.51 3.2Z"/><circle cx="5.4" cy="3.6" r="1.2" fill="#fff"/><circle cx="9.3" cy="3.6" r="1.2" fill="#fff"/><path d="M1.4 8.4L13.3 14.2M13.3 8.4L1.4 14.2" stroke="currentColor" stroke-width="1.6"/><circle cx="1.3" cy="8.2" r="1.3"/><circle cx="13.4" cy="8.2" r="1.3"/><circle cx="1.3" cy="14" r="1.3"/><circle cx="13.4" cy="14" r="1.3"/></svg>
<svg style="position:absolute;left:743.90px;top:518.90px;color:#000;fill:#000;" width="14.10" height="13.50" viewBox="0 0 14.1 13.5" preserveAspectRatio="none"><path d="M1 1.6Q4 1.8 7.05 0.6Q10.1 1.8 13.1 1.6Q13.8 9.6 7.05 13Q0.3 9.6 1 1.6Z" fill="none" stroke="#999" stroke-width="0.8"/></svg>
<svg style="position:absolute;left:742.00px;top:553.00px;color:#000;fill:#000;" width="18.00" height="12.00" viewBox="0 0 16 10.8" preserveAspectRatio="none"><rect x="2.3" y="0.65" width="11.6" height="7.6" fill="none" stroke="currentColor" stroke-width="1.3"/><path fill-rule="evenodd" d="M2 8.2H14.2L16 10.8H0Z M4 9.2V10H12.2V9.2Z"/></svg>
<svg style="position:absolute;left:742.90px;top:584.90px;color:#000;fill:#000;" width="16.00" height="15.00" viewBox="0 0 16.2 14.7" preserveAspectRatio="none"><ellipse cx="8.1" cy="5.8" rx="8.1" ry="5.8"/><path d="M3.4 9.4L2 14.7L8 10.8Z"/></svg>
<svg style="position:absolute;left:742.90px;top:619.00px;color:#000;fill:#000;" width="16.10" height="15.00" viewBox="0 0 15 14" preserveAspectRatio="none"><path d="M3.8 5.2L7.4 1L11 5.2M7.4 1.2V8.8" fill="none" stroke="currentColor" stroke-width="1.4"/><path d="M0.3 9.1H3.4V12.1H11.4V9.1H14.6V13.9H0.3Z"/></svg>
<svg style="position:absolute;left:743.00px;top:652.70px;color:#000;fill:#000;" width="15.00" height="15.00" viewBox="0 0 15 15" preserveAspectRatio="none"><path d="M4 11L11 4" stroke="currentColor" stroke-width="3"/><path d="M11.2 3.8L14.8 0.2" stroke="currentColor" stroke-width="1"/><path d="M1 10L5 14M2.6 12.4L0.4 14.6" stroke="currentColor" stroke-width="1.4"/><path d="M6 9L7 10M8 7L9 8" stroke="#fff" stroke-width="0.8"/></svg>
<svg style="position:absolute;left:742.00px;top:686.90px;color:#000;fill:#000;" width="17.60" height="14.70" viewBox="0 0 17.6 14.7" preserveAspectRatio="none"><path d="M2 0H12.8Q14.2 0 14.2 1.4V11.6H7.2Q6 11.6 6 12.8V13.6Q6 14.7 4.8 14.7H4.4Q3.2 14.7 3.2 13.6V2.4Q3.2 1.2 2 1.2Q0.8 1.2 0.8 2.4Q0.4 0 2 0Z"/><path d="M7 12.2H17.6L16.4 14.7H6.4Z"/></svg>
<svg style="position:absolute;left:743.90px;top:723.00px;color:#000;fill:#000;" width="14.10" height="12.00" viewBox="0 0 14.1 12" preserveAspectRatio="none"><g fill="none" stroke="#888" stroke-width="0.9"><path d="M3.4 4.6V0.5H11L12.6 2V4.6"/><rect x="0.5" y="4.6" width="13.1" height="6.9"/></g><rect x="7.4" y="5.4" width="5.4" height="1.4" fill="#555"/><rect x="1" y="8" width="12" height="1" fill="#aaa"/></svg>
<svg style="position:absolute;left:743.40px;top:753.00px;color:#000;fill:#000;" width="15.20" height="19.30" viewBox="0 0 13.3 16.7" preserveAspectRatio="none"><path fill-rule="evenodd" d="M1.2 1.8H3.3L4 0H9.3L10 1.8H12.1Q13.3 1.8 13.3 3V15.5Q13.3 16.7 12.1 16.7H1.2Q0 16.7 0 15.5V3Q0 1.8 1.2 1.8Z M4.6 1.1L4.1 3H9.2L8.7 1.1Z"/></svg>
<svg style="position:absolute;left:744.60px;top:788.70px;color:#000;fill:#000;" width="12.80" height="15.70" viewBox="0 0 12.8 15.7" preserveAspectRatio="none"><path d="M4.2 0.4L6.4 1.6L8.6 0.4L8 3.2H4.8Z"/><path d="M4.6 3.8H8.2Q12.8 7.4 12.8 11.6Q12.8 15.7 6.4 15.7Q0 15.7 0 11.6Q0 7.4 4.6 3.8Z"/><text x="6.4" y="13.8" font-size="9" font-family="Liberation Sans" font-weight="bold" fill="#fff" text-anchor="middle">$</text></svg>
<svg style="position:absolute;left:742.20px;top:822.10px;color:#000;fill:#000;" width="11.60" height="16.60" viewBox="0 0 11.6 16.6" preserveAspectRatio="none"><rect x="0.5" y="0.5" width="10.6" height="15.6" fill="none" stroke="#888" stroke-width="0.9"/><path d="M2.6 6Q3.6 3 6.6 3.6L8.4 3L8 5.2Q9.6 7.2 8 9.6L8.4 11.8L6.6 11.2Q3.6 12 2.6 9.2L3.6 8Z"/><circle cx="5.6" cy="7.4" r="1.4" fill="#ddd"/></svg>
<svg style="position:absolute;left:744.00px;top:855.80px;color:#000;fill:#000;" width="14.10" height="17.10" viewBox="0 0 14.1 17.1" preserveAspectRatio="none"><path d="M7.05 0.4Q8.2 0.4 8.2 1.6Q11.6 2.6 11.6 7.4V11.2Q11.6 13 14.1 14.6H0Q2.5 13 2.5 11.2V7.4Q2.5 2.6 5.9 1.6Q5.9 0.4 7.05 0.4Z"/><path d="M5 15.2H9.1Q9.1 17.1 7.05 17.1Q5 17.1 5 15.2Z"/></svg>
<div style="position:absolute;left:998.50px;top:371.20px;width:225.00px;height:383.40px;background:#fff;border:1px solid #bdbdbd;box-sizing:border-box;box-shadow:2px 5px 9px rgba(0,0,0,0.28);"></div>
<div style="position:absolute;left:999.50px;top:376.20px;width:223.00px;height:33.30px;background:#0097c9;"></div>
<div class="t" style="left:1031.09px;top:382.85px;font-size:16.00px;letter-spacing:0.117px;color:#fff;">Remote Desktop</div>
<div class="t" style="left:1031.09px;top:416.85px;font-size:16.00px;letter-spacing:0.386px;color:#222;">Keylogger Multiplatform</div>
<div class="t" style="left:1031.59px;top:450.85px;font-size:16.00px;letter-spacing:-0.015px;color:#222;">Capture WebCam</div>
<div class="t" style="left:1031.59px;top:484.85px;font-size:16.00px;letter-spacing:0.244px;color:#222;">Capture Microphone</div>
<div class="t" style="left:1031.09px;top:518.85px;font-size:16.00px;letter-spacing:0.029px;color:#222;">Reverse Microphone</div>
<div class="t" style="left:1032.37px;top:552.85px;font-size:16.00px;letter-spacing:0.038px;color:#222;">Audio Record</div>
<div class="t" style="left:1031.67px;top:586.85px;font-size:16.00px;letter-spacing:-0.264px;color:#222;">Screen Record</div>
<div class="t" style="left:1031.67px;top:620.85px;font-size:16.00px;letter-spacing:-0.133px;color:#222;">Screenshot</div>
<div class="t" style="left:1031.09px;top:654.85px;font-size:16.00px;letter-spacing:0.104px;color:#222;">Hidden Browser</div>
<div class="t" style="left:1031.09px;top:688.85px;font-size:16.00px;letter-spacing:0.177px;color:#222;">Hidden VNC</div>
<div class="t" style="left:1031.09px;top:722.85px;font-size:16.00px;letter-spacing:-0.121px;color:#222;">RDP Manager</div>
<svg style="position:absolute;left:1010.00px;top:385.10px;color:#000;fill:#000;" width="9.60" height="15.90" viewBox="0 0 9.6 15.9" preserveAspectRatio="none"><rect x="0.4" y="0.4" width="8.8" height="15.1" fill="#0a6d95" stroke="#074f6e" stroke-width="0.8"/><rect x="1.6" y="2.4" width="6.4" height="3.6" fill="#0b86b5"/><rect x="1.6" y="6.6" width="6.4" height="1" fill="#0b86b5"/><rect x="1.6" y="10.4" width="3.4" height="3.6" fill="#0b86b5"/><rect x="0" y="14.8" width="9.6" height="1.1" fill="#03344a"/></svg>
<svg style="position:absolute;left:1008.00px;top:420.90px;color:#000;fill:#000;" width="16.30" height="12.80" viewBox="0 0 16.3 12.8" preserveAspectRatio="none"><path fill-rule="evenodd" d="M0 0H16.3V12.8H0Z M1.2 1.4V11.4H15.1V1.4Z"/><g fill="#333"><rect x="2.4" y="2.6" width="1.3" height="1.5"/><rect x="2.4" y="5" width="1.3" height="1.5"/><rect x="2.4" y="7.4" width="1.3" height="1.5"/><rect x="4.7" y="2.6" width="1.3" height="1.5"/><rect x="4.7" y="5" width="1.3" height="1.5"/><rect x="4.7" y="7.4" width="1.3" height="1.5"/><rect x="7" y="2.6" width="1.3" height="1.5"/><rect x="7" y="5" width="1.3" height="1.5"/><rect x="7" y="7.4" width="1.3" height="1.5"/><rect x="9.3" y="2.6" width="1.3" height="1.5"/><rect x="9.3" y="5" width="1.3" height="1.5"/><rect x="9.3" y="7.4" width="1.3" height="1.5"/><rect x="11.6" y="2.6" width="1.3" height="1.5"/><rect x="11.6" y="5" width="1.3" height="1.5"/><rect x="11.6" y="7.4" width="1.3" height="1.5"/></g><rect x="4" y="9.4" width="8.3" height="1" fill="#666"/></svg>
<svg style="position:absolute;left:1005.90px;top:455.20px;color:#000;fill:#000;" width="18.10" height="12.20" viewBox="0 0 18.1 12.2" preserveAspectRatio="none"><path fill-rule="evenodd" d="M0.6 5.4Q0.6 3.2 2.8 3.2H9.8Q12 3.2 12 5.4V10Q12 12.2 9.8 12.2H2.8Q0.6 12.2 0.6 10Z M1.8 5.2V10.4H10.8V5.2Z"/><rect x="2.8" y="6" width="7" height="4.2"/><path d="M12.6 6.4L18.1 1.6V12L12.6 8.6Z"/><path d="M3.4 0.2L5.4 2.6H1.4Z"/></svg>
<svg style="position:absolute;left:1006.10px;top:486.50px;color:#000;fill:#000;" width="17.70" height="17.70" viewBox="0 0 17.7 17.7" preserveAspectRatio="none"><path d="M1.6 12V8.8Q1.6 1.2 8.85 1.2Q16.1 1.2 16.1 8.8V12" fill="none" stroke="#333" stroke-width="1.6"/><rect x="2.6" y="9.4" width="3" height="8.3" rx="1.5"/><rect x="12.1" y="9.4" width="3" height="8.3" rx="1.5"/><rect x="0.8" y="9" width="1.6" height="4.2"/><rect x="15.3" y="9" width="1.6" height="4.2"/></svg>
<svg style="position:absolute;left:1007.20px;top:523.60px;color:#000;fill:#000;" width="16.10" height="12.20" viewBox="0 0 16.1 12.2" preserveAspectRatio="none"><path d="M0 3.6H3.8L7.6 0V12.2L3.8 8.6H0Z"/><g fill="none" stroke="currentColor" stroke-width="1"><path d="M9.6 4Q11 6.1 9.6 8.2"/><path d="M11.8 2.4Q14.4 6.1 11.8 9.8"/><path d="M13.8 0.8Q17.4 6.1 13.8 11.4"/></g></svg>
<svg style="position:absolute;left:1011.00px;top:557.40px;color:#000;fill:#000;" width="7.80" height="12.70" viewBox="0 0 7.8 12.7" preserveAspectRatio="none"><path d="M1.4 1Q3.8 -0.6 6.6 1.4L6.8 6.4Q4.2 8.6 1.2 6.6Z" fill="#ccc" stroke="#777" stroke-width="0.7"/><path d="M3.6 8H5L4.4 12.7Z"/></svg>
<svg style="position:absolute;left:1005.90px;top:589.00px;color:#000;fill:#000;" width="18.10" height="15.00" viewBox="0 0 18.1 15" preserveAspectRatio="none"><circle cx="4.8" cy="3" r="3"/><circle cx="10" cy="3" r="3"/><rect x="2.2" y="5.6" width="10.8" height="9.4" rx="0.8"/><path d="M12.6 8.4L18.1 5.4V15L12.6 12Z"/><rect x="0" y="6.6" width="0.9" height="4.4"/></svg>
<svg style="position:absolute;left:1007.70px;top:625.80px;color:#000;fill:#000;" width="16.30" height="12.20" viewBox="0 0 16.3 12.2" preserveAspectRatio="none"><path fill-rule="evenodd" d="M0 4.4Q0 2.6 1.8 2.6H5L6.4 1H10L11 2.6Q14.2 3 14.2 5.2V10.6Q14.2 12.2 12.6 12.2H1.6Q0 12.2 0 10.6Z"/><circle cx="7" cy="7.6" r="2.6" fill="none" stroke="#fff" stroke-width="0.9"/><rect x="1.2" y="3.6" width="1.4" height="1" fill="#fff"/><circle cx="12.6" cy="3.6" r="3" fill="#fff" stroke="#fff"/><circle cx="12.6" cy="3.6" r="2" fill="#eee" stroke="#aaa" stroke-width="0.6"/></svg>
<svg style="position:absolute;left:1006.90px;top:656.70px;color:#000;fill:#000;" width="16.00" height="16.00" viewBox="0 0 15 15" preserveAspectRatio="none"><g fill="none" stroke="currentColor" stroke-width="0.8"><circle cx="7.5" cy="7.5" r="6.9"/><ellipse cx="7.5" cy="7.5" rx="3.6" ry="6.9"/><path d="M7.5 0.6V14.4M1 5H14M1 10H14"/></g></svg>
<svg style="position:absolute;left:1010.00px;top:691.20px;color:#000;fill:#000;" width="9.80" height="15.60" viewBox="0 0 9.8 15.6" preserveAspectRatio="none"><rect x="0.4" y="0.4" width="9" height="14.8" fill="#e8e8e8" stroke="#888" stroke-width="0.8"/><rect x="1.6" y="2" width="6.6" height="3.6" fill="#bbb"/><rect x="1.6" y="6.4" width="6.6" height="1.2" fill="#aaa"/><rect x="1.6" y="10.4" width="3.6" height="3.6" fill="#bbb"/><rect x="0" y="14.4" width="9.8" height="1.2" fill="#444"/></svg>
<svg style="position:absolute;left:1010.00px;top:725.10px;color:#000;fill:#000;" width="9.80" height="15.70" viewBox="0 0 9.8 15.6" preserveAspectRatio="none"><rect x="0.4" y="0.4" width="9" height="14.8" fill="#e8e8e8" stroke="#888" stroke-width="0.8"/><rect x="1.6" y="2" width="6.6" height="3.6" fill="#bbb"/><rect x="1.6" y="6.4" width="6.6" height="1.2" fill="#aaa"/><rect x="1.6" y="10.4" width="3.6" height="3.6" fill="#bbb"/><rect x="0" y="14.4" width="9.8" height="1.2" fill="#444"/></svg>
</div></div>
</body></html>
